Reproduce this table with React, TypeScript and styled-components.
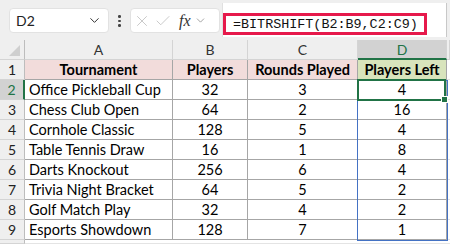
import React from 'react';
import styled, { createGlobalStyle } from 'styled-components';
import { ChevronDown, X, Check } from 'lucide-react';

const GREEN = '#217346';
const GRID = '#a6a6a6';
const HEAD_LINE = '#d4d4d4';

const GlobalStyle = createGlobalStyle`
    html, body {
        margin: 0;
        padding: 0;
        background: #ffffff;
        overflow: hidden;
    }
    body {
        width: 450px;
        height: 244px;
        font-family: Lato, "Liberation Sans", sans-serif;
    }
`;

const Sheet = styled.div`
    width: 450px;
    height: 244px;
    display: flex;
    flex-direction: column;
    overflow: hidden;
`;

const Toolbar = styled.div`
    height: 40px;
    flex: none;
    background: #efefef;
    display: flex;
    align-items: flex-start;
    padding-left: 9px;
    box-sizing: border-box;
`;

const NameBox = styled.div`
    margin-top: 8px;
    width: 100px;
    height: 25px;
    background: #fff;
    border-radius: 4px;
    border: 1px solid #e2e2e2;
    box-sizing: border-box;
    display: flex;
    align-items: center;
    justify-content: space-between;
    padding: 0 6px 0 6px;
    font-size: 14px;
    color: #222;
`;

const Dots = styled.div`
    margin-top: 15px;
    width: 21px;
    display: flex;
    flex-direction: column;
    align-items: center;
    gap: 2px;
    span {
        width: 2.5px;
        height: 2.5px;
        background: #444;
        border-radius: 50%;
    }
`;

const FxBox = styled.div`
    margin-top: 8px;
    width: 90px;
    height: 25px;
    background: #fff;
    border-radius: 4px;
    border: 1px solid #e2e2e2;
    box-sizing: border-box;
    display: flex;
    align-items: center;
    padding-left: 2px;
    gap: 3px;
`;

const Fx = styled.span`
    font-family: "Liberation Serif", serif;
    font-style: italic;
    font-size: 16px;
    color: #333;
    margin-left: 4px;
`;

const FormulaBar = styled.div`
    margin-top: 3px;
    margin-left: 2px;
    flex: 1;
    height: 34px;
    background: #fff;
    border-left: 1px solid #e0e0e0;
    border-right: 1px solid #c8c8c8;
    margin-right: 3px;
    position: relative;
`;

const FormulaHighlight = styled.div`
    position: absolute;
    left: 0;
    top: 10px;
    width: 204px;
    height: 22px;
    border: 3px solid #e6194b;
    box-sizing: border-box;
    display: flex;
    align-items: center;
    padding-left: 7px;
    font-family: "Liberation Mono", monospace;
    font-size: 13.4px;
    color: #111;
    white-space: nowrap;
`;

const Grid = styled.div`
    display: grid;
    grid-template-columns: 25px 148px 75px 110px 89px 1fr;
    grid-template-rows: 20px repeat(9, 20px) 1fr;
    flex: 1;
    position: relative;
`;

const Corner = styled.div`
    background: #efefef;
    border-right: 1px solid #bdbdbd;
    border-bottom: 1px solid ${HEAD_LINE};
    position: relative;
    &::after {
        content: '';
        position: absolute;
        right: 4px;
        bottom: 3px;
        border-left: 11px solid transparent;
        border-bottom: 11px solid #cfcfcf;
    }
`;

const ColHead = styled.div<{ $active?: boolean }>`
    background: ${(p) => (p.$active ? '#d2d2d2' : '#efefef')};
    color: ${(p) => (p.$active ? GREEN : '#333')};
    border-right: 1px solid ${HEAD_LINE};
    border-bottom: ${(p) => (p.$active ? `2px solid ${GREEN}` : `1px solid ${HEAD_LINE}`)};
    display: flex;
    align-items: center;
    justify-content: center;
    font-size: 14px;
    box-sizing: border-box;
`;

const RowHead = styled.div<{ $active?: boolean }>`
    background: ${(p) => (p.$active ? '#d2d2d2' : '#efefef')};
    color: ${(p) => (p.$active ? GREEN : '#222')};
    border-right: ${(p) => (p.$active ? `2px solid ${GREEN}` : '1px solid #bdbdbd')};
    border-bottom: 1px solid ${HEAD_LINE};
    display: flex;
    align-items: center;
    justify-content: center;
    font-size: 14px;
    box-sizing: border-box;
`;

const Cell = styled.div<{ $bg?: string; $align?: 'left' | 'center'; $bold?: boolean }>`
    background: ${(p) => p.$bg || '#fff'};
    border-right: 1px solid ${GRID};
    border-bottom: 1px solid ${GRID};
    display: flex;
    align-items: center;
    justify-content: ${(p) => (p.$align === 'left' ? 'flex-start' : 'center')};
    padding-left: ${(p) => (p.$align === 'left' ? '4px' : '0')};
    font-size: 14.5px;
    font-weight: ${(p) => (p.$bold ? 700 : 400)};
    color: #000;
    box-sizing: border-box;
    white-space: nowrap;
    overflow: hidden;
`;

const Empty = styled.div`
    background: #fff;
    border-bottom: 1px solid #e4e4e4;
`;

const SpillRange = styled.div`
    position: absolute;
    left: 357px;
    top: 40px;
    width: 91px;
    height: 161px;
    border: 1.5px solid #4472c4;
    box-sizing: border-box;
    pointer-events: none;
`;

const ActiveCell = styled.div`
    position: absolute;
    left: 357px;
    top: 39px;
    width: 89px;
    height: 22px;
    border: 2px solid ${GREEN};
    box-sizing: border-box;
    &::after {
        content: '';
        position: absolute;
        right: -4px;
        bottom: -4px;
        width: 5px;
        height: 5px;
        background: ${GREEN};
        border: 1px solid #fff;
    }
`;

const rows: [string, number, number, number][] = [
    ['Office Pickleball Cup', 32, 3, 4],
    ['Chess Club Open', 64, 2, 16],
    ['Cornhole Classic', 128, 5, 4],
    ['Table Tennis Draw', 16, 1, 8],
    ['Darts Knockout', 256, 6, 4],
    ['Trivia Night Bracket', 64, 5, 2],
    ['Golf Match Play', 32, 4, 2],
    ['Esports Showdown', 128, 7, 1],
];

const PINK = '#f2dcdb';
const LIME = '#d8e4bc';

export default function App() {
    return (
        <Sheet>
            <GlobalStyle />
            <Toolbar>
                <NameBox>
                    <span>D2</span>
                    <ChevronDown size={15} strokeWidth={1.6} color="#333" />
                </NameBox>
                <Dots><span /><span /><span /></Dots>
                <FxBox>
                    <X size={18} strokeWidth={1.2} color="#c4c4c4" />
                    <Check size={18} strokeWidth={1.2} color="#c4c4c4" />
                    <Fx>fx</Fx>
                    <ChevronDown size={13} strokeWidth={1.4} color="#888" />
                </FxBox>
                <FormulaBar>
                    <FormulaHighlight>=BITRSHIFT(B2:B9,C2:C9)</FormulaHighlight>
                </FormulaBar>
            </Toolbar>
            <Grid>
                <Corner />
                <ColHead>A</ColHead>
                <ColHead>B</ColHead>
                <ColHead>C</ColHead>
                <ColHead $active>D</ColHead>
                <ColHead />

                <RowHead>1</RowHead>
                <Cell $bg={PINK} $bold>Tournament</Cell>
                <Cell $bg={PINK} $bold>Players</Cell>
                <Cell $bg={PINK} $bold>Rounds Played</Cell>
                <Cell $bg={LIME} $bold>Players Left</Cell>
                <Empty />

                {rows.map(([name, players, rounds, left], i) => (
                    <React.Fragment key={name}>
                        <RowHead $active={i === 0}>{i + 2}</RowHead>
                        <Cell $align="left">{name}</Cell>
                        <Cell>{players}</Cell>
                        <Cell>{rounds}</Cell>
                        <Cell>{left}</Cell>
                        <Empty />
                    </React.Fragment>
                ))}

                <RowHead />
                <Empty />
                <Empty />
                <Empty />
                <Empty />
                <Empty />

                <SpillRange />
                <ActiveCell />
            </Grid>
        </Sheet>
    );
}
